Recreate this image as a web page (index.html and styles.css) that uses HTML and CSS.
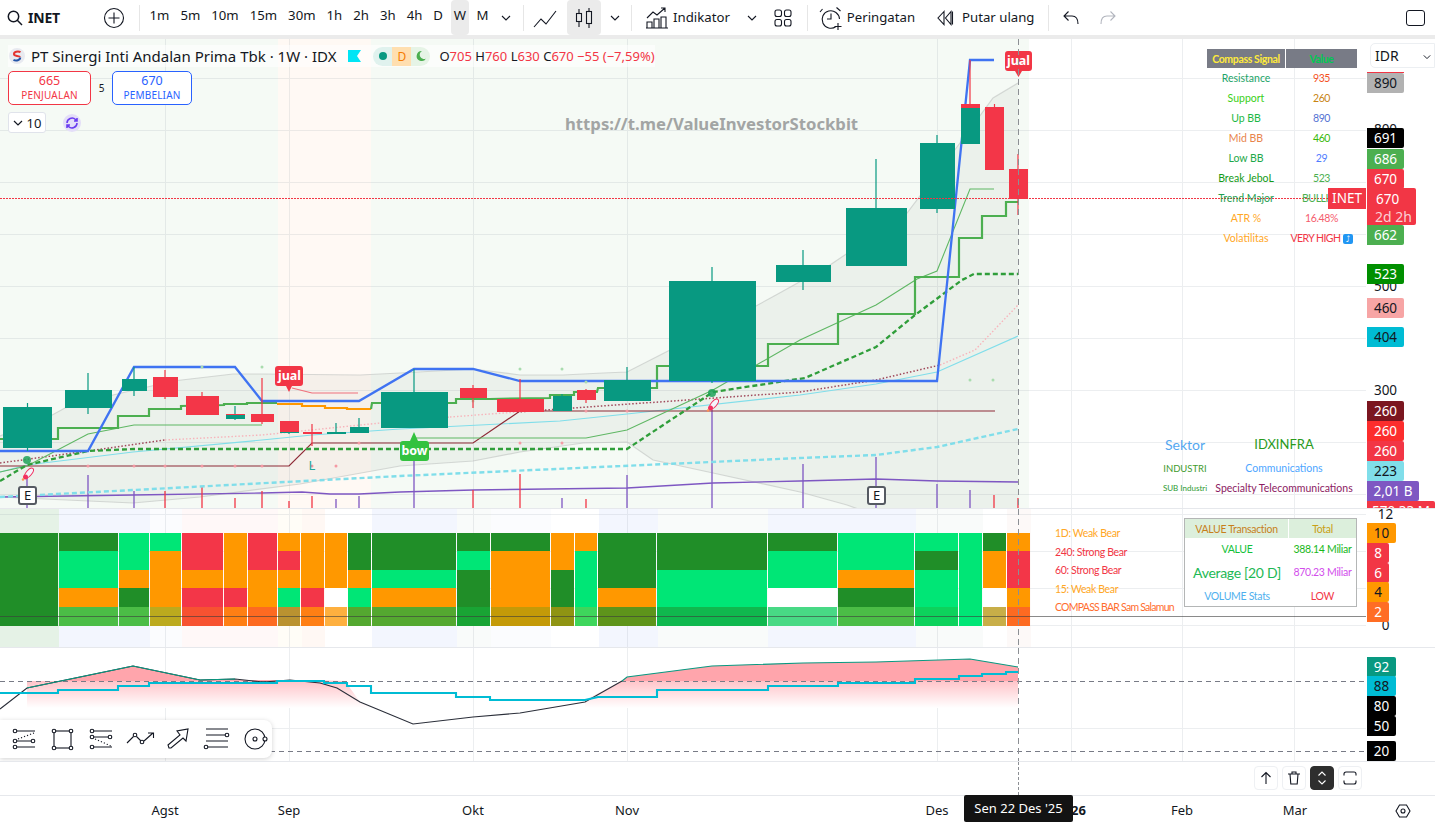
FILE: index.html
```html
<!DOCTYPE html>
<html lang="id">
<head>
<meta charset="utf-8">
<title>INET</title>
<link rel="stylesheet" href="styles.css">
</head>
<body>
<div class="app">
  <header class="toolbar">
    <div class="tb-symbol">
      <svg class="ic-18" viewBox="0 0 18 18"><circle cx="7.5" cy="7.5" r="5.2"/><path d="M11.3 11.3L16 16"/></svg>
      <span class="symbol-name">INET</span>
    </div>
    <button class="tb-add"><svg class="ic-22" viewBox="0 0 22 22"><circle cx="11" cy="11" r="9.5"/><path d="M11 5.5v11M5.5 11h11"/></svg></button>
    <i class="tb-sep sep-a"></i>
    <div class="intervals">
      <span class="iv">1m</span><span class="iv">5m</span><span class="iv">10m</span><span class="iv">15m</span><span class="iv">30m</span><span class="iv">1h</span><span class="iv">2h</span><span class="iv">3h</span><span class="iv">4h</span><span class="iv">D</span><span class="iv iv-active">W</span><span class="iv">M</span>
    </div>
    <svg class="chev chev-a" viewBox="0 0 10 6"><path d="M1 1l4 4 4-4"/></svg>
    <i class="tb-sep sep-b"></i>
    <svg class="ic-24 ic-line" viewBox="0 0 24 24"><path d="M1 21l7-8 5 5 10-13"/></svg>
    <span class="tb-active"><svg class="ic-24" viewBox="0 0 24 24"><path d="M7 3v4M7 15v6M17 2v3M17 18v4"/><rect x="4.5" y="7.5" width="5" height="8"/><rect x="14.5" y="5.5" width="5" height="12"/></svg></span>
    <svg class="chev chev-b" viewBox="0 0 10 6"><path d="M1 1l4 4 4-4"/></svg>
    <i class="tb-sep sep-c"></i>
    <svg class="ic-24 ic-ind" viewBox="0 0 24 24"><path d="M2 22V16h5v6zM9 22V13h5v9zM16 22V11h5v11zM1 22h22M2 12l6-6 4 3 8-7M16 2h4v4"/></svg>
    <span class="tb-text txt-ind">Indikator</span>
    <svg class="chev chev-c" viewBox="0 0 10 6"><path d="M1 1l4 4 4-4"/></svg>
    <svg class="ic-20 ic-lay" viewBox="0 0 20 20"><rect x="2" y="2" width="6.5" height="6.5" rx="2"/><rect x="11.5" y="2" width="6.5" height="6.5" rx="2"/><rect x="2" y="11.5" width="6.5" height="6.5" rx="2"/><rect x="11.5" y="11.5" width="6.5" height="6.5" rx="2"/></svg>
    <i class="tb-sep sep-d"></i>
    <svg class="ic-24 ic-alarm" viewBox="0 0 24 24"><path d="M17 20.5A8.7 8.7 0 1 1 20.5 13M12 7.5V13H8M3.5 3L1 6M17.5 1.5l4 3.5M19 17v7M15.5 20.5h7"/></svg>
    <span class="tb-text txt-alarm">Peringatan</span>
    <svg class="ic-18 ic-replay" viewBox="0 0 18 18"><path d="M8 2.5L2 9l6 6.5zM15 2.5L9.500 9l5.500 6.500zM16.500 2.500v13"/></svg>
    <span class="tb-text txt-replay">Putar ulang</span>
    <i class="tb-sep sep-e"></i>
    <svg class="ic-18 ic-undo" viewBox="0 0 18 18"><path d="M6.500 2.500L2 7l4.500 4.500M2.500 7H10c4 0 6 2.500 6 8"/></svg>
    <svg class="ic-18 ic-redo" viewBox="0 0 18 18"><path d="M11.500 2.500L16 7l-4.500 4.500M15.500 7H8c-4 0-6 2.500-6 8"/></svg>
    <span class="tb-window"></span>
  </header>
  <div class="tb-gap"></div>

  <section class="pane pane-main">
    <svg class="chart" viewBox="0 39 1435 469">
      <rect class="tint-green" x="0" y="39" width="1029" height="469"/>
      <rect class="tint-orange" x="278" y="39" width="93" height="469"/>
      <path class="grid" d="M0 78H1366M0 130H1366M0 182H1366M0 234H1366M0 286H1366M0 338H1366M0 390H1366M0 442H1366M0 494H1366M165 39V508M289 39V508M473 39V508M627 39V508M937 39V508M1071 39V508M1182 39V508M1294 39V508"/>
      <polygon class="band" points="0,436 43,420 65,408 113,395 173,381 233,374 263,374 360,375 400,373 473,369 520,375 563,375 603,373 627,372 670,350 712,330 776,295 830,265 907,213 960,143 993,98 1018,83 1018,570 1000,560 847,505 800,492 713,473 653,460 627,442 583,443 520,452 473,461 400,466 300,484 200,497 133,503 0,497"/>
      <polyline class="band-line" points="0,436 43,420 65,408 113,395 173,381 233,374 263,374 360,375 400,373 473,369 520,375 563,375 603,373 627,372 670,350 712,330 776,295 830,265 907,213 960,143 993,98 1018,83"/>
      <polyline class="band-line" points="0,497 133,503 200,497 300,484 400,466 473,461 520,452 583,443 627,442 653,460 713,473 800,492 847,505 1000,560"/>
      <polyline class="l-purple" points="0,497 133,495 262,493 302,492 330,494 359,494 400,492 473,490 627,488 713,483 800,481 876,479 937,481 1018,482"/>
      <g class="vol-p"><path d="M27 475V508M88 475V508M134 491V508M336 499V508M359 496V508M414 460V508M562 498V508M627 475V508M712 410V508M803 464V508M876 457V508M937 484V508M970 490V508"/></g>
      <g class="vol-r"><path d="M165 491V508M202 487V508M235 498V508M262 491V508M289 501V508M312 496V508M473 490V508M520 474V508M586 499V508M994 495V508M1018 498V508"/></g>
      <polyline class="l-cyan-dash" points="0,497 400,476 800,458 876,455 937,447 1018,429"/>
      <polyline class="l-cyan" points="0,472 27,465 133,452 262,440 312,435 400,429 560,421 627,414 800,395 876,384 937,372 1018,336"/>
      <polyline class="l-dot-dark" points="0,463 88,451 165,440"/>
      <polyline class="l-dot-pink" points="165,440 262,435 380,423 450,417"/>
      <polyline class="l-dot-dark" points="517,412 800,392 876,380 940,365"/>
      <polyline class="l-dot-pink" points="450,417 517,412"/>
      <polyline class="l-dot-pink" points="940,365 975,350 1018,305"/>
      <polyline class="l-darkred" points="0,466 289,466 312,443 473,443 520,411 995,411"/>
      <polyline class="l-thin-green" points="0,472 27,466 88,434 134,425 262,425"/>
      <polyline class="l-thin-green" points="414,438 586,438 627,430 713,390 800,340 876,305 917,279 937,271 970,189 994,189"/>
      <polyline class="l-green-dash" points="0,481 27,465 88,451 134,449 627,449 713,392 805,378 876,347 915,315 962,280 974,274 1018,274"/>
      <polyline class="l-green" points="0,439 58,439 58,428 118,428 118,416 149,416 149,409 181,409 181,406 224,405 224,404 247,404 247,403 277,403"/>
      <polyline class="l-orange" points="277,404 302,404 302,406 325,406 325,408 347,408 347,409 371,409"/>
      <polyline class="l-green" points="371,409 372,403 381,403 448,403 456,403 456,399 490,399 550,398 550,395 574,395 574,392 597,392 598,388 657,388 657,366 768,366 768,344 838,344 838,314 915,314 915,277 959,277 959,238 982,238 982,216 1006,216 1006,202 1018,202"/>
      <polyline class="l-blue" points="0,451 88,451 134,367 235,367 262,401 359,401 414,369 473,369 520,381 937,381 970,60 994,60"/>
      <path class="l-redthin" d="M292 388L312 393H358"/>
      <g class="dot-g"><circle cx="202" cy="367" r="1.500"/><circle cx="262" cy="367" r="1.500"/><circle cx="520" cy="369" r="1.500"/><circle cx="562" cy="369" r="1.500"/><circle cx="586" cy="382" r="1.500"/><circle cx="473" cy="401" r="1.500"/><circle cx="970" cy="380" r="1.500"/><circle cx="993" cy="380" r="1.500"/></g>
      <g class="dot-r"><circle cx="88" cy="466" r="1.500"/><circle cx="134" cy="466" r="1.500"/><circle cx="165" cy="466" r="1.500"/><circle cx="202" cy="466" r="1.500"/><circle cx="235" cy="466" r="1.500"/><circle cx="262" cy="466" r="1.500"/><circle cx="312" cy="466" r="1.500"/><circle cx="336" cy="466" r="1.500"/><circle cx="359" cy="443" r="1.500"/><circle cx="520" cy="443" r="1.500"/><circle cx="562" cy="443" r="1.500"/><circle cx="586" cy="411" r="1.500"/><circle cx="627" cy="411" r="1.500"/></g>
      <g class="wick-g"><path d="M27.500 403V451M88 373V414M134 367V396M235 406V420M289 431V434M336 423V434M359 418V433M414 369V392M562 394V398M627 367V380M712 267V383M803 250V290M876 159V208M937 135V213"/></g>
      <g class="candle-g"><rect x="3" y="407" width="49" height="41"/><rect x="65" y="390" width="47" height="18"/><rect x="122" y="379" width="25" height="12"/><rect x="226" y="415" width="19" height="4"/><rect x="280" y="432" width="19" height="1"/><rect x="327" y="432" width="19" height="2"/><rect x="350" y="427" width="19" height="6"/><rect x="381" y="392" width="67" height="36"/><rect x="553" y="396" width="19" height="15"/><rect x="604" y="380" width="47" height="21"/><rect x="669" y="281" width="87" height="100"/><rect x="776" y="265" width="55" height="17"/><rect x="846" y="208" width="61" height="58"/><rect x="920" y="143" width="35" height="66"/><rect x="961" y="108" width="19" height="36"/></g>
      <g class="wick-r"><path d="M165 370V399M202 392V415M262 378V424M289 424V432M312 424V446M473 385V408M520 379V412M586 389V403M970 60V104M994.500 104V170M1018 154V215"/></g>
      <g class="candle-r"><rect x="153" y="377" width="25" height="20"/><rect x="186" y="396" width="33" height="19"/><rect x="226" y="414" width="19" height="1"/><rect x="251" y="414" width="23" height="8"/><rect x="280" y="421" width="19" height="11"/><rect x="303" y="432" width="19" height="2"/><rect x="460" y="388" width="27" height="10"/><rect x="497" y="399" width="47" height="13"/><rect x="577" y="390" width="19" height="10"/><rect x="961" y="104" width="19" height="4"/><rect x="985" y="107" width="19" height="63"/><rect x="1009" y="169" width="19" height="30"/></g>
      <path class="price-line" d="M0 198.500H1366"/>
      <circle class="signal-dot" cx="27" cy="460" r="4"/>
      <circle class="signal-dot" cx="712" cy="393" r="4"/>
      <g class="rocket"><ellipse cx="29" cy="473" rx="2.800" ry="6" transform="rotate(40 29 473)"/><circle class="rocket-core" cx="25.500" cy="477" r="2.500"/><circle class="rocket-tail" cx="23" cy="479.500" r="1.200"/></g>
      <g class="rocket"><ellipse cx="714" cy="404" rx="2.800" ry="6" transform="rotate(40 714 404)"/><circle class="rocket-core" cx="710.500" cy="408" r="2.500"/><circle class="rocket-tail" cx="708" cy="410.500" r="1.200"/></g>
      <path class="flag-red" d="M278 366h22a3 3 0 0 1 3 3v14a3 3 0 0 1-3 3h-8l-3 6-3-6h-8a3 3 0 0 1-3-3v-14a3 3 0 0 1 3-3z"/>
      <text class="sig" x="289.500" y="380">jual</text>
      <path class="flag-red" d="M1008 51h21a3 3 0 0 1 3 3v14a3 3 0 0 1-3 3h-7l-3.500 6-3.500-6h-7a3 3 0 0 1-3-3v-14a3 3 0 0 1 3-3z"/>
      <text class="sig" x="1018.500" y="65">jual</text>
      <path class="flag-green" d="M403 441h7l4-9 4 9h8a3 3 0 0 1 3 3v14a3 3 0 0 1-3 3h-23a3 3 0 0 1-3-3v-14a3 3 0 0 1 3-3z"/>
      <text class="sig" x="414.500" y="455">bow</text>
      <text class="mark-l" x="312" y="470">L</text>
      <g><rect class="e-box" x="19" y="487" width="17" height="17" rx="2"/><text class="e-txt" x="27.500" y="500">E</text></g>
      <g><rect class="e-box" x="868" y="487" width="17" height="17" rx="2"/><text class="e-txt" x="876.500" y="500">E</text></g>
      <text class="watermark" x="565" y="130">https://t.me/ValueInvestorStockbit</text>
      <path class="crosshair" d="M1018.500 39V508"/>
    </svg>

    <div class="legend">
      <div class="legend-title">
        <span class="logo"><svg viewBox="0 0 16 16" class="logo-svg"><circle class="logo-bg" cx="8" cy="8" r="8"/><path class="logo-r" d="M11.500 4.200C9 2.800 4.800 3.800 5 6.300c.1 2.300 5.500 1 6 3"/><path class="logo-b" d="M4.500 11.800c2.500 1.400 6.800.4 6.700-2.300"/></svg></span>
        <span class="title-text">PT Sinergi Inti Andalan Prima Tbk · 1W · IDX</span>
        <svg class="flag-icon" viewBox="0 0 13 12"><path d="M0 0h13l-4 6 4 6H0z"/></svg>
        <span class="status-pill">
          <span class="seg seg-a"><i class="dot-teal"></i></span>
          <span class="seg seg-b">D</span>
          <span class="seg seg-c"><svg class="moon" viewBox="0 0 12 12"><path d="M7 1a5 5 0 1 0 4 7.500A4.200 4.200 0 0 1 7 1z"/></svg></span>
        </span>
        <span class="ohlc"><b>O</b><em>705</em> <b>H</b><em>760</em> <b>L</b><em>630</em> <b>C</b><em>670</em> <em>−55 (−7,59%)</em></span>
      </div>
      <div class="legend-boxes">
        <div class="box box-sell"><strong>665</strong><small>PENJUALAN</small></div>
        <span class="spread">5</span>
        <div class="box box-buy"><strong>670</strong><small>PEMBELIAN</small></div>
      </div>
      <div class="legend-row3">
        <span class="collapse"><svg class="chev" viewBox="0 0 10 6"><path d="M1 1l4 4 4-4"/></svg>10</span>
        <span class="refresh"><svg class="refresh-svg" viewBox="0 0 14 14"><path d="M2 7a5 5 0 0 1 8.500-3.500L12 5M12 7a5 5 0 0 1-8.500 3.500L2 9M12 2v3H9M2 12V9h3"/></svg></span>
      </div>
    </div>

    <table class="t-signal">
      <thead><tr><th class="c-yellow">Compass Signal</th><th class="c-green">Value</th></tr></thead>
      <tbody>
        <tr><td class="s1">Resistance</td><td class="v1">935</td></tr>
        <tr><td class="s2">Support</td><td class="v2">260</td></tr>
        <tr><td class="s3">Up BB</td><td class="v3">890</td></tr>
        <tr><td class="s4">Mid BB</td><td class="v4">460</td></tr>
        <tr><td class="s5">Low BB</td><td class="v5">29</td></tr>
        <tr><td class="s6">Break JeboL</td><td class="v6">523</td></tr>
        <tr><td class="s7">Trend Major</td><td class="v6">BULLISH</td></tr>
        <tr><td class="s8">ATR %</td><td class="v8">16.48%</td></tr>
        <tr><td class="s8">Volatilitas</td><td class="v9">VERY HIGH <i class="up-badge">⤴</i></td></tr>
      </tbody>
    </table>

    <table class="t-sector">
      <tr class="r-lg"><td class="sec-a">Sektor</td><td class="sec-b">IDXINFRA</td></tr>
      <tr class="r-md"><td class="sec-c">INDUSTRI</td><td class="sec-d">Communications</td></tr>
      <tr class="r-sm"><td class="sec-e">SUB Industri</td><td class="sec-f">Specialty Telecommunications</td></tr>
    </table>

    <span class="flag-inet">INET</span>
    <div class="axis">
      <span class="ax-plain" style="top:80px">800</span>
      <span class="ax-plain" style="top:237px">500</span>
      <span class="ax-plain" style="top:341px">300</span>
      <span class="axis-stem"></span>
      <span class="tag t-gray" style="top:34px">890</span>
      <span class="tag t-black" style="top:89px">691</span>
      <span class="tag t-green" style="top:110px">686</span>
      <span class="tag t-red" style="top:130px">670</span>
      <span class="tag t-red t-count" style="top:149px">670<small>2d 2h</small></span>
      <span class="tag t-green" style="top:186px">662</span>
      <span class="tag t-dkgreen" style="top:225px">523</span>
      <span class="tag t-pink" style="top:259px">460</span>
      <span class="tag t-cyan" style="top:288px">404</span>
      <span class="tag t-maroon" style="top:362px">260</span>
      <span class="tag t-bright" style="top:382px">260</span>
      <span class="tag t-red" style="top:402px">260</span>
      <span class="tag t-ltcyan" style="top:422px">223</span>
      <span class="tag t-purple t-wide" style="top:442px">2,01 B</span>
      <span class="tag t-red t-wider" style="top:462px">570,33 M</span>
    </div>
    <div class="currency">IDR<svg class="chev" viewBox="0 0 10 6"><path d="M1 1l4 4 4-4"/></svg></div>
  </section>

  <section class="pane pane-compass">
    <svg class="chart" viewBox="0 509 1435 138">
      <g class="bgs">
        <rect class="bg1" x="0" y="509" width="59" height="138"/><rect class="bg2" x="59" y="509" width="91" height="138"/><rect class="bg3" x="150" y="509" width="32" height="138"/><rect class="bg4" x="182" y="509" width="96" height="138"/><rect class="bg5" x="278" y="509" width="24" height="138"/><rect class="bg6" x="302" y="509" width="23" height="138"/><rect class="bg2" x="372" y="509" width="85" height="138"/><rect class="bg7" x="457" y="509" width="34" height="138"/><rect class="bg3" x="491" y="509" width="60" height="138"/><rect class="bg2" x="599" y="509" width="59" height="138"/><rect class="bg7" x="658" y="509" width="110" height="138"/><rect class="bg2" x="768" y="509" width="148" height="138"/><rect class="bg7" x="916" y="509" width="67" height="138"/><rect class="bg8" x="1007" y="509" width="24" height="138"/>
      </g>
      <path class="grid" d="M0 514H1366M0 551H1366M0 588H1366M0 625H1366M165 509V647M289 509V647M473 509V647M627 509V647M937 509V647M1071 509V647M1182 509V647M1294 509V647"/>
      <g class="cg">
        <rect x="0" y="533" width="58" height="93"/><rect x="59" y="533" width="59" height="18"/><rect x="119" y="588" width="30" height="19"/><rect x="348" y="533" width="23" height="37"/><rect x="372" y="533" width="84" height="37"/><rect x="457" y="533" width="33" height="18"/><rect x="457" y="570" width="33" height="37"/><rect x="491" y="533" width="59" height="18"/><rect x="551" y="570" width="23" height="37"/><rect x="598" y="533" width="58" height="55"/><rect x="657" y="533" width="110" height="37"/><rect x="768" y="533" width="69" height="18"/><rect x="838" y="588" width="76" height="19"/><rect x="915" y="551" width="43" height="19"/><rect x="983" y="533" width="23" height="18"/>
      </g>
      <g class="cb">
        <rect x="59" y="551" width="59" height="37"/><rect x="119" y="533" width="30" height="37"/><rect x="150" y="533" width="31" height="18"/><rect x="278" y="588" width="22" height="19"/><rect x="348" y="588" width="23" height="19"/><rect x="372" y="570" width="84" height="18"/><rect x="457" y="551" width="33" height="19"/><rect x="575" y="551" width="22" height="56"/><rect x="657" y="570" width="110" height="37"/><rect x="768" y="551" width="69" height="37"/><rect x="838" y="533" width="76" height="37"/><rect x="915" y="533" width="43" height="18"/><rect x="915" y="570" width="43" height="37"/><rect x="959" y="533" width="23" height="93"/>
      </g>
      <g class="co">
        <rect x="59" y="588" width="59" height="19"/><rect x="119" y="570" width="30" height="18"/><rect x="150" y="551" width="31" height="56"/><rect x="182" y="570" width="41" height="18"/><rect x="224" y="533" width="23" height="55"/><rect x="248" y="570" width="29" height="37"/><rect x="278" y="533" width="22" height="18"/><rect x="278" y="570" width="22" height="18"/><rect x="301" y="533" width="23" height="55"/><rect x="325" y="533" width="22" height="55"/><rect x="348" y="570" width="23" height="18"/><rect x="372" y="588" width="84" height="19"/><rect x="491" y="551" width="59" height="56"/><rect x="551" y="533" width="23" height="37"/><rect x="575" y="533" width="22" height="18"/><rect x="598" y="588" width="58" height="19"/><rect x="838" y="570" width="76" height="18"/><rect x="983" y="551" width="23" height="37"/><rect x="1007" y="533" width="23" height="18"/><rect x="1007" y="588" width="23" height="19"/>
      </g>
      <g class="cr">
        <rect x="182" y="533" width="41" height="37"/><rect x="182" y="588" width="41" height="19"/><rect x="224" y="588" width="23" height="19"/><rect x="248" y="533" width="29" height="37"/><rect x="278" y="551" width="22" height="19"/><rect x="301" y="588" width="23" height="19"/><rect x="1007" y="551" width="23" height="37"/>
      </g>
      <g class="cw"><rect x="325" y="588" width="22" height="19"/><rect x="768" y="588" width="69" height="19"/><rect x="983" y="588" width="23" height="19"/></g>
      <rect class="k1" x="59" y="607" width="59" height="19"/><rect class="k1" x="119" y="607" width="30" height="19"/><rect class="k2" x="150" y="607" width="31" height="19"/><rect class="k3" x="182" y="607" width="41" height="19"/><rect class="k4" x="224" y="607" width="23" height="19"/><rect class="k5" x="248" y="607" width="29" height="19"/><rect class="k6" x="278" y="607" width="22" height="19"/><rect class="k4" x="301" y="607" width="23" height="19"/><rect class="k7" x="325" y="607" width="22" height="19"/><rect class="k8" x="348" y="607" width="23" height="19"/><rect class="k8" x="372" y="607" width="84" height="19"/><rect class="k9" x="457" y="607" width="33" height="19"/><rect class="k10" x="491" y="607" width="59" height="19"/><rect class="k11" x="551" y="607" width="23" height="19"/><rect class="k12" x="575" y="607" width="22" height="19"/><rect class="k13" x="598" y="607" width="58" height="19"/><rect class="k14" x="657" y="607" width="110" height="19"/><rect class="k15" x="768" y="607" width="69" height="19"/><rect class="k1" x="838" y="607" width="76" height="19"/><rect class="k16" x="915" y="607" width="43" height="19"/><rect class="k17" x="983" y="607" width="23" height="19"/><rect class="k5" x="1007" y="607" width="23" height="19"/>
      <path class="level" d="M0 616.500H1366"/>
      <path class="crosshair" d="M1018.500 509V647"/>
    </svg>
    <ul class="tf-list">
      <li class="tf-o">1D: Weak Bear</li>
      <li class="tf-r">240: Strong Bear</li>
      <li class="tf-r">60: Strong Bear</li>
      <li class="tf-o">15: Weak Bear</li>
      <li class="tf-d">COMPASS BAR Sam Salamun</li>
    </ul>
    <table class="t-value">
      <thead><tr><th class="h-a">VALUE Transaction</th><th class="h-b">Total</th></tr></thead>
      <tbody>
        <tr class="vr-a"><td class="val-a">VALUE</td><td class="val-b">388.14 Miliar</td></tr>
        <tr class="vr-b"><td class="val-c">Average [20 D]</td><td class="val-d">870.23 Miliar</td></tr>
        <tr class="vr-a"><td class="val-e">VOLUME Stats</td><td class="val-f">LOW</td></tr>
      </tbody>
    </table>
    <div class="axis">
      <span class="ax-plain" style="top:-5px">12</span>
      <span class="ax-plain" style="top:106px">0</span>
      <span class="tag t-orange t-narrow" style="top:14px">10</span>
      <span class="tag t-red t-narrow2" style="top:34px">8</span>
      <span class="tag t-red t-narrow2" style="top:54px">6</span>
      <span class="tag t-orange t-narrow2" style="top:73px">4</span>
      <span class="tag t-deep t-narrow2" style="top:93px">2</span>
    </div>
  </section>

  <section class="pane pane-rsi">
    <svg class="chart" viewBox="0 648 1435 113">
      <defs><linearGradient id="fade" x1="0" y1="0" x2="0" y2="1"><stop offset="0" stop-color="#ffc4c9"/><stop offset="1" stop-color="#ffffff"/></linearGradient></defs>
      <path class="grid" d="M0 728H1366M165 648V761M289 648V761M473 648V761M627 648V761M937 648V761M1071 648V761M1182 648V761M1294 648V761"/>
      <polygon class="rsi-solid" points="27,681 27,688 133,666 200,680 290,680 345,681"/>
      <polygon class="rsi-solid" points="622,681 627,677 712,666 803,663 876,662 970,659 1018,667 1018,681"/>
      <polygon class="rsi-fade" points="27,681 345,681 360,702 372,708 27,708"/>
      <polygon class="rsi-fade" points="585,708 585,700 622,681 1018,681 1018,708"/>
      <path class="dash-line" d="M0 681.500H1366M0 751.500H1366"/>
      <polyline class="rsi-black" points="0,709 27,688 133,666 200,680 235,679 263,682 290,680 320,683 337,688 360,702 413,724 473,717 520,713 585,702 622,681"/>
      <polyline class="rsi-teal" points="27,688 133,666 200,680 235,679"/>
      <polyline class="rsi-teal" points="622,681 627,677 712,666 803,663 876,662 970,659 1018,667"/>
      <polyline class="rsi-ma" points="0,693 58,693 58,690 118,690 118,686 149,686 149,683 277,683 277,681 324,681 324,683 347,683 347,686 371,686 371,693 456,693 456,697 490,697 490,700 585,700 598,697 657,697 657,690 768,690 768,686 838,686 838,683 915,683 915,679 959,679 959,676 982,676 982,674 1006,674 1006,672 1018,672"/>
      <path class="crosshair" d="M1018.500 648V761"/>
    </svg>
    <div class="axis">
      <span class="tag t-teal t-narrow" style="top:9px">92</span>
      <span class="tag t-cyan t-narrow" style="top:28px">88</span>
      <span class="tag t-black t-narrow" style="top:48px">80</span>
      <span class="tag t-black t-narrow" style="top:68px">50</span>
      <span class="tag t-black t-narrow" style="top:93px">20</span>
    </div>
    <div class="draw-tools">
      <svg class="dt" viewBox="12 727 24 24"><circle cx="15" cy="731" r="1.800"/><circle cx="15" cy="741" r="1.800"/><circle cx="15" cy="747" r="1.800"/><circle cx="33" cy="741" r="1.800"/><path d="M17 731H35M17 741H31M17 747H35"/><path class="dotted" d="M18 739L34 733"/></svg>
      <svg class="dt" viewBox="51 727 24 24"><rect x="54" y="731" width="17" height="17"/><circle cx="54" cy="731" r="1.800"/><circle cx="71" cy="731" r="1.800"/><circle cx="54" cy="748" r="1.800"/><circle cx="71" cy="748" r="1.800"/></svg>
      <svg class="dt" viewBox="88 727 24 24"><circle cx="91" cy="731" r="1.800"/><circle cx="91" cy="737" r="1.800"/><circle cx="91" cy="747" r="1.800"/><circle cx="109" cy="737" r="1.800"/><path d="M93 731H111M93 737H107M93 747H111"/><path class="dotted" d="M94 739L110 746"/></svg>
      <svg class="dt" viewBox="127 727 24 24"><path d="M126 743L132.500 736.500M135.500 736.500L140 741M143 741L152 733M147 733H152.500V738"/><circle cx="134" cy="735" r="1.800"/><circle cx="141" cy="742" r="1.800"/></svg>
      <svg class="dt" viewBox="165 727 24 24"><path d="M168 748L167 745L179 735L176 731L187 729L185 741L182 738L170 748Z"/></svg>
      <svg class="dt" viewBox="203 727 24 24"><path d="M204 729H226M204 735H223M204 741H226M206 747H226"/><circle cx="225" cy="735" r="1.800"/><circle cx="204" cy="747" r="1.800"/></svg>
      <svg class="dt" viewBox="241 727 24 24"><circle cx="253" cy="739" r="10"/><circle cx="253" cy="739" r="2"/><circle class="dt-handle" cx="263" cy="739" r="2"/></svg>
    </div>
  </section>

  <div class="strip">
    <i class="strip-cross"></i>
    <div class="strip-btns">
      <span class="sbtn"><svg class="ic-14" viewBox="0 0 14 14"><path d="M7 13V1.500M2.500 6L7 1.500 11.500 6"/></svg></span>
      <span class="sbtn"><svg class="ic-14" viewBox="0 0 14 14"><path d="M1 3h12M5 3V1h4v2M3 3l.8 10h6.400L11 3"/></svg></span>
      <span class="sbtn sbtn-on"><svg class="ic-14" viewBox="0 0 14 14"><path d="M3.500 4.500L7 1l3.500 3.500M3.500 9.500L7 13l3.500-3.500"/></svg></span>
      <span class="sbtn"><svg class="ic-14" viewBox="0 0 14 14"><path d="M1 4.500V3a2 2 0 0 1 2-2h8a2 2 0 0 1 2 2v1.500M1 9.500V11a2 2 0 0 0 2 2h8a2 2 0 0 0 2-2V9.500"/></svg></span>
    </div>
  </div>

  <footer class="timescale">
    <span class="tick" style="left:165px">Agst</span>
    <span class="tick" style="left:289px">Sep</span>
    <span class="tick" style="left:473px">Okt</span>
    <span class="tick" style="left:627px">Nov</span>
    <span class="tick" style="left:937px">Des</span>
    <span class="tick tick-b" style="left:1071px">2026</span>
    <span class="tick" style="left:1182px">Feb</span>
    <span class="tick" style="left:1295px">Mar</span>
    <span class="time-tip">Sen 22 Des '25</span>
    <svg class="gear" viewBox="0 0 16 14"><path d="M4.500 1h7L15 7l-3.500 6h-7L1 7z"/><circle cx="8" cy="7" r="2"/></svg>
  </footer>
</div>
</body>
</html>
```
FILE: styles.css
```css
*{box-sizing:border-box}
html,body{margin:0;padding:0;background:#fff}
body{font-family:"Noto Sans","Open Sans",sans-serif;color:#131722;overflow:hidden}
.app{width:1435px;height:823px;display:flex;flex-direction:column;overflow:hidden}
svg{display:block}
button{background:none;border:0;padding:0;display:flex}

/* top toolbar */
.toolbar{height:35px;flex:none;display:flex;align-items:center;background:#fff;font-size:13.2px;line-height:31px}
.tb-gap{height:4px;flex:none;background:#ebebeb}
.toolbar svg{fill:none;stroke:#131722;stroke-width:1.1;flex:none}
.ic-18{width:18px;height:18px}.ic-20{width:20px;height:20px}.ic-22{width:22px;height:22px}.ic-24{width:24px;height:24px}.ic-14{width:14px;height:14px}
.tb-symbol{display:flex;align-items:center;gap:4px;padding-left:6px;width:103px}
.tb-symbol svg{stroke-width:1.5}
.symbol-name{font-weight:700;font-size:14px;letter-spacing:-.2px}
.tb-sep{width:1px;height:26px;background:#e6e6e6;flex:none}
.sep-a{margin-left:14px;margin-right:4px}
.intervals{display:flex;align-items:center}
.iv{padding:0 5.500px;height:35px;line-height:31px;border-radius:4px}
.iv-active{background:#ebebeb;padding:0 3px;margin:0 2.200px}
.chev{width:10px;height:6px;fill:none;stroke:#131722;stroke-width:1.2}
.toolbar .chev{width:10px;height:6px}
.chev-a{margin-left:7px}
.sep-b{margin-left:12px}
.ic-line{margin-left:9px}
.tb-active{width:34px;height:35px;background:#ebebeb;border-radius:4px;display:flex;align-items:center;justify-content:center;margin-left:10px}
.chev-b{margin-left:9px}
.sep-c{margin-left:11px}
.ic-ind{margin-left:13px}
.txt-ind{margin-left:4px}
.chev-c{margin-left:17px}
.ic-lay{margin-left:16px}
.sep-d{margin-left:14px}
.ic-alarm{margin-left:11px}
.txt-alarm{margin-left:4px}
.ic-replay{margin-left:21px}
.txt-replay{margin-left:8px}
.sep-e{margin-left:14px}
.ic-undo{margin-left:13px}
.toolbar .ic-redo{margin-left:19px;stroke:#b2b5be}
.tb-window{margin-left:auto;margin-right:10px;width:19px;height:16px;border:1.2px solid #131722;border-radius:3px}

/* panes */
.pane{position:relative;overflow:hidden;flex:none}
.pane-main{height:470px;border-bottom:1px solid #e6e8ec}
.pane-compass{height:139px;border-bottom:1px solid #e6e8ec}
.pane-rsi{height:114px;border-bottom:1px solid #e6e8ec}
.chart{width:1435px;position:absolute;left:0;top:0}
.pane-main .chart{height:469px}
.pane-compass .chart{height:138px}
.pane-rsi .chart{height:113px}
.tint-green{fill:#f5faf5}
.tint-orange{fill:#fff9f4}
.grid{fill:none;stroke:#8a93a3;stroke-opacity:.16;stroke-width:1;shape-rendering:crispEdges}
.band{fill:#7f8c85;fill-opacity:.08}
.band-line{fill:none;stroke:#b9bdbb;stroke-opacity:.55;stroke-width:1.2}
.l-purple{fill:none;stroke:#7e57c2;stroke-width:1.4}
.vol-p path{stroke:#7e57c2;stroke-width:1.3;fill:none}
.vol-r path{stroke:#f23645;stroke-width:1.3;fill:none}
.l-cyan-dash{fill:none;stroke:#80deea;stroke-width:2.4;stroke-dasharray:5 3}
.l-cyan{fill:none;stroke:#80deea;stroke-width:1.2}
.l-dot-dark{fill:none;stroke:#a0485a;stroke-width:1.5;stroke-dasharray:1.5 2}
.l-dot-pink{fill:none;stroke:#f7b4bb;stroke-width:1.4;stroke-dasharray:1.5 2}
.l-darkred{fill:none;stroke:#8e2a36;stroke-width:1.2}
.l-thin-green{fill:none;stroke:#5fb764;stroke-width:1.1}
.l-green-dash{fill:none;stroke:#2f9e3a;stroke-width:2.3;stroke-dasharray:5 3}
.l-green{fill:none;stroke:#4caf50;stroke-width:2.2}
.l-orange{fill:none;stroke:#ff9800;stroke-width:2.2}
.l-blue{fill:none;stroke:#3f73f2;stroke-width:2.3}
.l-redthin{fill:none;stroke:#f0707c;stroke-width:1.1}
.dot-g circle{fill:#a9dcae}
.dot-r circle{fill:#f59aa4}
.wick-g path{stroke:#089981;stroke-width:1.2;fill:none}
.wick-r path{stroke:#f23645;stroke-width:1.2;fill:none}
.candle-g rect{fill:#089981}
.candle-r rect{fill:#f33648}
.price-line{stroke:#f23645;stroke-width:1;stroke-dasharray:2 1;fill:none}
.signal-dot{fill:#1fa25a;fill-opacity:.85}
.rocket ellipse{fill:#f3f5fb;stroke:#f2305f;stroke-width:1}
.rocket-core{fill:#f2305f}
.rocket-tail{fill:#ff9152}
.flag-red{fill:#f23645}
.flag-green{fill:#33c23f}
.sig{font:700 12.5px "Noto Sans",sans-serif;fill:#fff;text-anchor:middle}
.mark-l{font:13px "Noto Sans",sans-serif;fill:#26a69a;text-anchor:middle}
.e-box{fill:#fff;stroke:#555a62;stroke-width:2}
.e-txt{font:13px "Noto Sans",sans-serif;fill:#131722;text-anchor:middle}
.watermark{font:700 16.7px "Noto Sans",sans-serif;fill:#a2a5a4}
.crosshair{stroke:#8c8f94;stroke-width:1;stroke-dasharray:6 4;fill:none}

/* legend */
.legend{position:absolute;left:8px;top:6px;display:flex;flex-direction:column}
.legend-title{display:flex;align-items:center;height:22px;background:rgba(255,255,255,.55)}
.logo{width:16px;height:16px;margin-left:1px;flex:none}
.logo-svg{width:16px;height:16px}
.logo-bg{fill:#e8eaf0}
.logo-r{fill:none;stroke:#e3342f;stroke-width:2}
.logo-b{fill:none;stroke:#2355a8;stroke-width:2}
.title-text{font-size:15px;margin-left:6px;white-space:nowrap}
.flag-icon{width:13px;height:12px;margin-left:12px;fill:#00e5f5}
.status-pill{display:flex;height:19px;margin-left:12px;border-radius:10px;overflow:hidden}
.seg{width:19px;display:flex;align-items:center;justify-content:center;font-size:12px}
.seg-a{background:#e0f2ee}
.seg-b{background:#ffdfb0;color:#f57c00}
.seg-c{background:#e6f4e6}
.dot-teal{width:8px;height:8px;border-radius:50%;background:#089981}
.moon{width:12px;height:12px;fill:#4caf50}
.ohlc{margin-left:9px;font-size:13px;white-space:nowrap}
.ohlc b{font-weight:400}
.ohlc em{font-style:normal;color:#f23645}
.legend-boxes{display:flex;align-items:center;margin-top:4px}
.box{height:34px;border-radius:5px;border:1px solid;text-align:center;background:#fff;display:flex;flex-direction:column;justify-content:center;line-height:14px}
.box strong{font-weight:400;font-size:12.5px}
.box small{font-size:10px;letter-spacing:.2px}
.box-sell{width:83px;border-color:#f23645;color:#f23645}
.box-buy{width:80px;border-color:#2962ff;color:#2962ff}
.spread{width:21px;text-align:center;font-size:10px}
.legend-row3{display:flex;align-items:center;margin-top:7px}
.collapse{width:38px;height:21px;background:#fff;border:1px solid #e0e3eb;border-radius:3px;font-size:13px;display:flex;align-items:center;justify-content:center;gap:4px}
.refresh{width:18px;height:18px;border-radius:50%;background:#e4def8;margin-left:17px;display:flex;align-items:center;justify-content:center}
.refresh-svg{width:14px;height:14px;fill:none;stroke:#6a3df0;stroke-width:1.6}

/* signal table */
.t-signal{position:absolute;left:1206px;top:10px;border-collapse:separate;border-spacing:1px 0;table-layout:fixed;width:152px;font-family:Lato,"Noto Sans",sans-serif;font-size:10.5px;text-align:center}
.t-signal th{background:#787b86;height:19px;font-weight:700;padding:0;font-size:10.5px;letter-spacing:-.35px;white-space:nowrap}
.t-signal th:first-child{width:78px}
.t-signal td{height:20px;padding:0;white-space:nowrap}
.t-signal td+td{letter-spacing:-.4px}
.c-yellow{color:#ffeb3b}.c-green{color:#00c853}
.s1{color:#1ca468}.v1{color:#f4511e}
.s2{color:#3bd018}.v2{color:#c88414}
.s3{color:#1cb845}.v3{color:#5472d3}
.s4{color:#e8844a}.v4{color:#38b908}
.s5{color:#1ea84a}.v5{color:#4f7cff}
.s6{color:#159a18}.v6{color:#4caf50}
.s7{color:#1f9e50}
.s8{color:#ffa726}.v8{color:#f55c6d}
.t-signal td.v9{color:#f23645;letter-spacing:-.55px}
.up-badge{display:inline-block;width:10px;height:10px;line-height:10px;background:#2196f3;color:#fff;border-radius:2px;font-style:normal;font-size:8px;vertical-align:middle}

/* sector table */
.t-sector{position:absolute;left:1160px;top:393px;width:198px;border-collapse:collapse;table-layout:fixed;text-align:center;white-space:nowrap;font-family:Lato,"Noto Sans",sans-serif}
.t-sector td{padding:0}
.t-sector td:first-child{width:50px}
.r-lg{height:24px;font-size:14px}
.r-md{height:24px;font-size:10.5px}
.r-sm{height:16px;font-size:10.5px}
.sec-a{color:#54a8f0}.sec-b{color:#2a9a1c;font-size:13px}.sec-c{color:#3f9b2d;font-size:9.5px}.sec-d{color:#4da6ff}
.r-sm .sec-e{color:#2e9a30;font-size:8px}.sec-f{color:#8b1a62}

/* axis */
.axis{position:absolute;left:1367px;top:0;width:68px;height:100%}
.ax-plain{position:absolute;left:0;width:37px;height:20px;line-height:20px;text-align:center;font-size:13.5px;color:#131722}
.axis-stem{position:absolute;left:0;top:33px;width:37px;height:1px;background:#f23645}
.tag{position:absolute;left:0;width:37px;height:20px;line-height:21px;text-align:center;font-size:13.5px;color:#fff;border-radius:0 2px 2px 0}
.t-gray{background:#b2b2b2;color:#131722}
.t-black{background:#000}
.t-green{background:#4caf50}
.t-red{background:#f23645}
.t-dkgreen{background:#008f00}
.t-pink{background:#f7a5a5;color:#131722}
.t-cyan{background:#00bcd4;color:#131722}
.t-maroon{background:#7b1620}
.t-bright{background:#fc2d2d}
.t-ltcyan{background:#80deea;color:#131722}
.t-purple{background:#7e57c2}
.t-deep{background:#ff6d24}
.t-orange{background:#ff9800;color:#131722}
.t-teal{background:#089981}
.t-wide{width:52px}
.t-wider{width:68px}
.t-narrow{width:29px}
.t-narrow2{width:22px}
.t-count{width:49px;height:37px;line-height:17px;text-align:left;padding:3px 0 0 9px}
.t-count small{display:block;font-size:14px;color:#fbd0d5;margin-left:-1px}
.flag-inet{position:absolute;left:1328px;top:149px;width:38px;height:21px;background:#f23645;color:#fff;font-size:13.5px;line-height:21px;text-align:center}
.currency{position:absolute;left:1370px;top:4px;width:65px;height:25px;background:#fff;border:1px solid #eceff2;border-radius:5px 0 0 5px;font-size:14px;line-height:23px;padding-left:4px}
.currency .chev{position:absolute;right:3px;top:10px;width:8px}

/* compass pane */
.bg1{fill:#e5f2e6}.bg2{fill:#f3f6fe}.bg3{fill:#fbfcfe}.bg4{fill:#fff8f8}.bg5{fill:#fffdf7}.bg6{fill:#fff8f4}.bg7{fill:#f9fbfa}.bg8{fill:#fdf9f8}
.cg rect{fill:#208e28}
.cb rect{fill:#00e676}
.co rect{fill:#ff9800}
.cr rect{fill:#f33648}
.cw rect{fill:#fff}
.k1{fill:#4bbd46}.k2{fill:#bcaa1e}.k3{fill:#f75231}.k4{fill:#ff7f14}.k5{fill:#fd6a21}.k6{fill:#ba9230}.k7{fill:#feb03f}.k8{fill:#54a830}.k9{fill:#19a434}.k10{fill:#c49a08}.k11{fill:#8f9413}.k12{fill:#3ed65c}.k13{fill:#5e941b}.k14{fill:#10b84e}.k15{fill:#48d985}.k16{fill:#0dd25c}.k17{fill:#c8ae48}
.level{stroke:#3c3c3c;stroke-opacity:.6;stroke-width:1;fill:none}
.tf-list{position:absolute;left:1055px;top:15px;margin:0;padding:0;list-style:none;font-family:Lato,"Noto Sans",sans-serif;font-size:10.5px;letter-spacing:-.35px;line-height:18.500px;white-space:nowrap}
.tf-o{color:#ffa726}.tf-r{color:#f23645}.tf-list .tf-d{color:#ff6d2e;letter-spacing:-.75px}
.t-value{position:absolute;left:1184px;top:9px;width:173px;height:88px;border:1px solid #b4b6b6;border-collapse:separate;border-spacing:0;table-layout:fixed;background:#fff;text-align:center;white-space:nowrap;font-family:Lato,"Noto Sans",sans-serif;font-size:10.5px;letter-spacing:-.3px}
.t-value th,.t-value td{padding:0}
.t-value th{height:19px;font-weight:400;background:#dcefdc;font-size:10.5px}
.t-value th:first-child{width:104px;border-right:1px solid #fff}
.h-a{color:#c77f1a}.h-b{color:#c9a015}
.vr-a{height:21px}.vr-b{height:26px}
.val-a{color:#13c13a}.val-b{color:#19b81a}
.val-c{color:#1db954;font-size:14px}.val-d{color:#d24dec}
.val-e{color:#4fb0ee}.val-f{color:#f23645}

/* rsi pane */
.rsi-solid{fill:#ffa5ac}
.rsi-fade{fill:url(#fade)}
.dash-line{stroke:#787b86;stroke-width:1;stroke-dasharray:5 4;fill:none}
.rsi-black{fill:none;stroke:#2a2e39;stroke-width:1.1}
.rsi-teal{fill:none;stroke:#089981;stroke-width:1.1}
.rsi-ma{fill:none;stroke:#00bcd4;stroke-width:2.1}
.draw-tools{position:absolute;left:0;top:72px;width:272px;height:38px;background:#fff;border-radius:0 8px 8px 0;box-shadow:0 1px 5px rgba(0,0,0,.18);display:flex;align-items:center;gap:14.500px;padding-left:12px}
.dt{width:24px;height:24px;flex:none;fill:#fff;stroke:#131722;stroke-width:1.1;overflow:visible}
.dt path{fill:none}
.dt path.dotted{stroke-dasharray:1.2 2}
.dt-handle{fill:#fff}

/* bottom */
.strip{position:relative;height:34px;flex:none;border-bottom:1px solid #e6e8ec;display:flex;justify-content:flex-end;align-items:flex-start;padding:4px 73px 0 0}
.strip-cross{position:absolute;left:1018px;top:0;height:33px;border-left:1px dashed #8c8f94}
.strip-btns{display:flex;gap:4px}
.sbtn{width:24px;height:24px;border:1px solid #eef0f3;border-radius:4px;background:#fff;display:flex;align-items:center;justify-content:center}
.sbtn svg{fill:none;stroke:#131722;stroke-width:1.1}
.sbtn-on{background:#2e2e2e;border-color:#2e2e2e}
.sbtn-on svg{stroke:#fff}
.timescale{position:relative;flex:1;font-size:13px;line-height:28px}
.tick{position:absolute;top:0;transform:translateX(-50%);white-space:nowrap}
.tick-b{font-weight:700}
.time-tip{position:absolute;left:964px;top:-1px;width:109px;height:27px;line-height:27px;background:#131313;color:#fff;text-align:center;border-radius:2px;white-space:nowrap}
.gear{position:absolute;left:1395px;top:8px;width:16px;height:14px;fill:none;stroke:#131722;stroke-width:1.1}
```
